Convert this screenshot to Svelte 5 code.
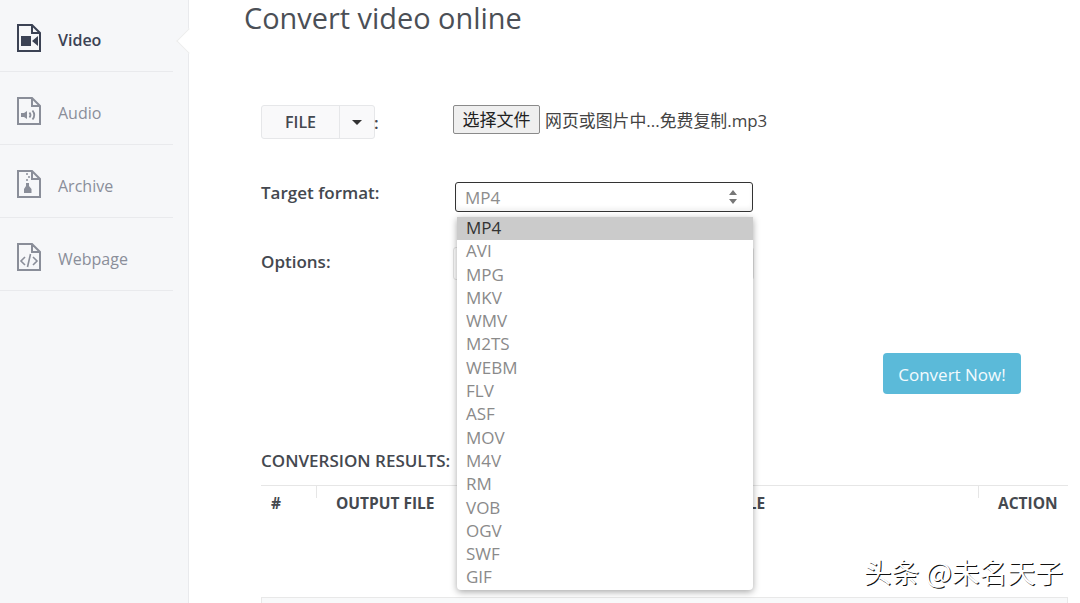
<script>
    const nav = [
        { label: "Video", kind: "video", active: true },
        { label: "Audio", kind: "audio" },
        { label: "Archive", kind: "archive" },
        { label: "Webpage", kind: "webpage" },
    ];
    const formats = ["MP4", "AVI", "MPG", "MKV", "WMV", "M2TS", "WEBM", "FLV", "ASF", "MOV", "M4V", "RM", "VOB", "OGV", "SWF", "GIF"];
</script>

<div class="page">
    <aside class="sidebar">
        {#each nav as item}
            <div class="nav-item" class:active={item.active}>
                <svg class="doc" viewBox="0 0 24 28" width="24" height="28">
                    <path d="M1 1H15L23 9V27H1Z M15 1V9H23" fill="none" stroke="currentColor" stroke-width="2" />
                    {#if item.kind === "video"}
                        <path d="M4 12H14V22H4Z M15 17L21 12V22Z" fill="currentColor" />
                    {:else if item.kind === "audio"}
                        <path d="M4 16H7L10 14V22L7 20H4Z" fill="currentColor" />
                        <path d="M12.500 15.500Q14.500 18 12.500 20.500 M15.500 13.500Q19 18 15.500 22.500" fill="none" stroke="currentColor" stroke-width="1.800" />
                    {:else if item.kind === "archive"}
                        <path d="M9 4H11M11 7H13M9 10H11" stroke="currentColor" stroke-width="1.500" />
                        <path d="M9 13H12V16L14.500 19V23H7V19L9 16Z" fill="currentColor" />
                    {:else}
                        <path d="M8 14L4 18L8 22 M16 14L20 18L16 22 M13.500 11L10.500 24" fill="none" stroke="currentColor" stroke-width="1.600" />
                    {/if}
                </svg>
                <span>{item.label}</span>
            </div>
        {/each}
    </aside>

    <main class="content">
        <h1>Convert video online</h1>

        <div class="form">
            <div class="row row-file">
                <div class="label-col">
                    <div class="split">
                        <span class="split-main">FILE</span>
                        <span class="split-caret"><i></i></span>
                    </div>
                    <b>:</b>
                </div>
                <div class="file-input">
                    <span class="file-btn">选择文件</span>
                    <span class="file-name">网页或图片中...免费复制.mp3</span>
                </div>
            </div>

            <div class="row row-target">
                <div class="label-col"><b>Target format:</b></div>
                <div class="select-wrap">
                    <div class="select">
                        <span>MP4</span>
                        <svg viewBox="0 0 8 14" width="8" height="14">
                            <path d="M4 0L8 5H0Z M4 14L0 9H8Z" fill="#777" />
                        </svg>
                    </div>
                    <ul class="dropdown">
                        {#each formats as f, i}
                            <li class:selected={i === 0}>{f}</li>
                        {/each}
                    </ul>
                </div>
            </div>

            <div class="row row-options">
                <div class="label-col"><b>Options:</b></div>
                <div class="options-box"></div>
            </div>

            <div class="row-submit">
                <span class="convert">Convert Now!</span>
            </div>

            <div class="results-title">CONVERSION RESULTS:</div>
            <div class="table-head">
                <div class="th th-num">#</div>
                <div class="th th-file">OUTPUT FILE</div>
                <div class="th th-size">ORIGINAL FILE</div>
                <div class="th th-action">ACTION</div>
            </div>
            <div class="table-foot"></div>
        </div>
    </main>

    <div class="watermark">头条 @未名天子</div>
</div>

<style>
    :global(body) {
        margin: 0;
        background: #fff;
        overflow: hidden;
    }

    .page {
        display: flex;
        position: relative;
        height: 603px;
        overflow: hidden;
        font-family: "Open Sans", "Noto Sans CJK SC", sans-serif;
        color: #3d4148;
    }

    .sidebar {
        position: relative;
        width: 189px;
        flex: none;
        margin-top: -1px;
        padding-right: 15px;
        box-sizing: border-box;
        background: #f6f7f9;
        border-right: 1px solid #e9eaed;
    }

    /* notch pointing at the active item */
    .sidebar::after {
        content: "";
        position: absolute;
        top: 33px;
        right: -10px;
        width: 18px;
        height: 18px;
        box-sizing: border-box;
        background: #fff;
        border-left: 1px solid #eceded;
        border-bottom: 1px solid #eceded;
        transform: rotate(45deg);
    }

    .nav-item {
        display: flex;
        align-items: center;
        gap: 17px;
        height: 72px;
        margin-bottom: 1px;
        padding: 9px 0 0 17px;
        box-sizing: border-box;
        box-shadow: 0 1px 0 #e9eaed;
        font-size: 16px;
        color: #8a8e99;
    }

    .nav-item svg {
        margin-top: -4px;
    }

    .nav-item.active {
        color: #3b4254;
        font-weight: 600;
    }

    .content {
        flex: 1;
        min-width: 0;
        padding-left: 55px;
        padding-right: 12px;
    }

    h1 {
        margin: 0;
        font-size: 28.9px;
        line-height: 36px;
        font-weight: 400;
        color: #4b4f56;
    }

    .form {
        padding: 69px 0 0 17px;
    }

    .row {
        display: flex;
    }

    .label-col {
        display: flex;
        width: 192px;
        flex: none;
        align-items: center;
    }

    .label-col b {
        font-weight: 600;
        font-size: 17px;
        color: #44484f;
    }

    .row-file {
        height: 34px;
    }

    .split {
        display: flex;
        width: 114px;
        height: 34px;
        box-sizing: border-box;
        border: 1px solid #e6e7e9;
        border-radius: 3px;
        background: #f9f9fa;
        font-size: 16px;
        font-weight: 600;
        color: #44484f;
        margin-right: -1px;
    }

    .split-main {
        display: flex;
        width: 77px;
        align-items: center;
        justify-content: center;
        border-right: 1px solid #e6e7e9;
    }

    .split-caret {
        display: flex;
        flex: 1;
        align-items: center;
        justify-content: center;
    }

    .split-caret i {
        border: 5px solid transparent;
        border-top-color: #333;
        border-bottom-width: 0;
    }

    .file-input {
        display: flex;
        align-items: flex-start;
        gap: 5px;
        color: #444;
    }

    .file-btn {
        display: block;
        width: 87px;
        height: 29px;
        box-sizing: border-box;
        border: 1px solid #8a8a8a;
        border-radius: 2px;
        background: #efefef;
        color: #222;
        font-size: 17px;
        line-height: 27px;
        text-align: center;
    }

    .file-name {
        font-size: 16.9px;
        line-height: 32px;
    }

    .row-target {
        margin-top: 43px;
        height: 30px;
    }

    .row-target .label-col {
        align-items: flex-start;
        line-height: 22px;
    }

    .select-wrap {
        position: relative;
        margin-left: 2px;
    }

    .select {
        display: flex;
        width: 298px;
        height: 30px;
        padding: 0 15px 0 9px;
        box-sizing: border-box;
        align-items: center;
        justify-content: space-between;
        border: 1px solid #333;
        border-radius: 3px;
        background: #fff;
        box-shadow: inset 0 -3px 4px #f2f2f2;
        font-size: 17px;
        color: #8d8d8d;
    }

    .dropdown {
        position: absolute;
        z-index: 2;
        top: 35px;
        left: 2px;
        width: 296px;
        margin: 0;
        padding: 0;
        list-style: none;
        background: #fff;
        border-radius: 0 0 4px 4px;
        box-shadow: 0 2px 7px rgba(0, 0, 0, 0.35);
        font-size: 17px;
        color: #8a8a8a;
    }

    .dropdown li {
        height: 23.3px;
        padding-left: 9px;
        line-height: 21.5px;
    }

    .dropdown li.selected {
        background: #cbcbcb;
        color: #333;
    }

    .row-options {
        margin-top: 35px;
        height: 33px;
    }

    .row-options .label-col {
        align-items: flex-start;
        padding-top: 4px;
        line-height: 22px;
    }

    .options-box {
        width: 301px;
        height: 33px;
        box-sizing: border-box;
        border: 1px solid #e4e4e4;
        border-radius: 3px;
    }

    .row-submit {
        display: flex;
        justify-content: flex-end;
        margin-top: 73px;
        padding-right: 47px;
    }

    .convert {
        display: flex;
        width: 138px;
        height: 41px;
        padding-top: 1px;
        box-sizing: border-box;
        align-items: center;
        justify-content: center;
        border-radius: 4px;
        background: #5bbad9;
        font-size: 17px;
        color: #f3fbfe;
    }

    .results-title {
        margin-top: 56px;
        font-size: 17px;
        line-height: 22px;
        font-weight: 600;
        color: #44484f;
    }

    .table-head {
        display: grid;
        grid-template-columns: 55px 1fr 1fr 90px;
        height: 111px;
        margin-top: 13px;
        border-top: 1px solid #e6e6e6;
        font-size: 15.5px;
        font-weight: 700;
        color: #45494f;
    }

    .th {
        position: relative;
        padding-top: 6px;
        line-height: 22px;
    }

    .th + .th::before {
        content: "";
        position: absolute;
        top: 0;
        left: 0;
        width: 1px;
        height: 12px;
        background: #e6e6e6;
    }

    .th-num {
        padding-left: 10px;
    }

    .th-file {
        padding-left: 20px;
    }

    .th-size {
        padding-left: 7px;
    }

    .th-action {
        padding-left: 20px;
    }

    .table-foot {
        height: 8px;
        background: #f8f9fa;
        border: 1px solid #e8e8e8;
    }

    .watermark {
        position: absolute;
        z-index: 3;
        right: 17px;
        top: 552px;
        font-family: "Noto Sans CJK SC", sans-serif;
        font-size: 27.8px;
        line-height: 38px;
        color: #fff;
        text-shadow: 1px 1px 0 #111;
    }
</style>
